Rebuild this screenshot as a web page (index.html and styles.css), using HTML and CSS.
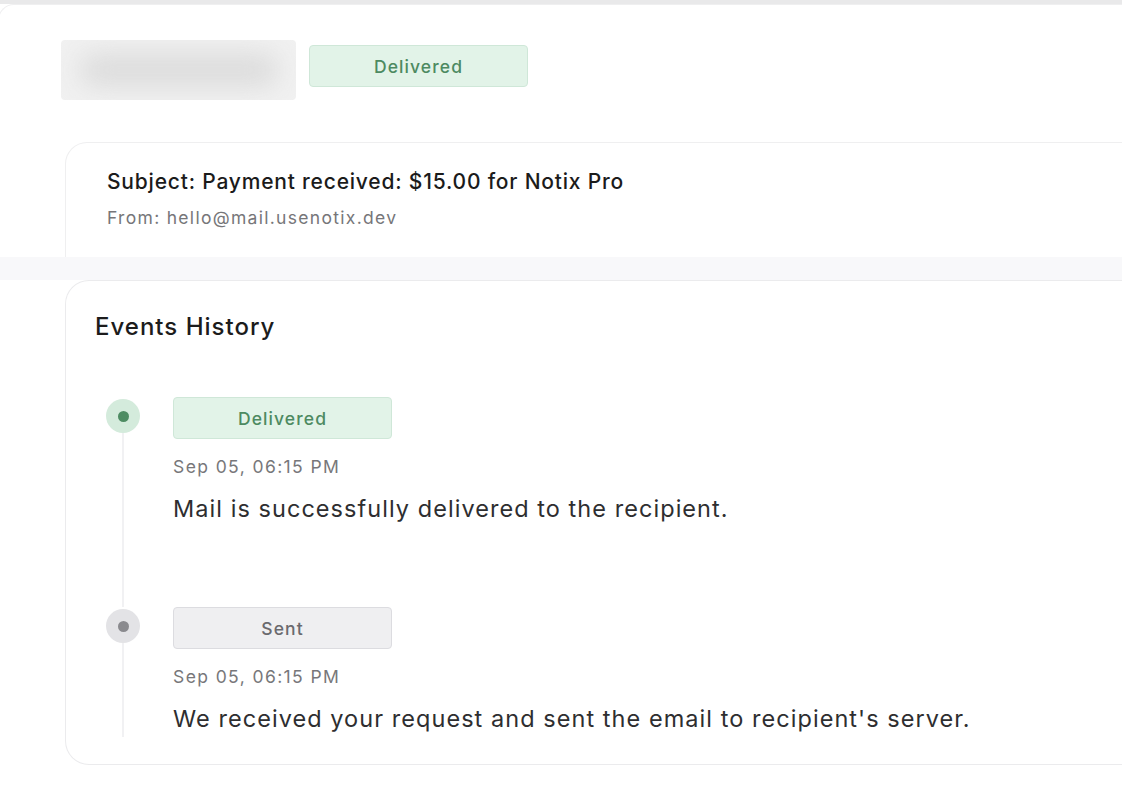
FILE: index.html
```html
<!DOCTYPE html>
<html lang="en">
<head>
<meta charset="utf-8">
<title>Email details</title>
<link rel="stylesheet" href="styles.css">
</head>
<body>
<div class="panel">
  <div class="header">
    <div class="blurred"><div class="blurred-inner"></div></div>
    <span class="badge badge-green badge-head">Delivered</span>
  </div>
  <div class="subject-card">
    <div class="subject">Subject: Payment received: $15.00 for Notix Pro</div>
    <div class="from">From: hello@mail.usenotix.dev</div>
  </div>
</div>
<div class="band"></div>
<div class="events-card">
  <h2 class="events-title">Events History</h2>
  <div class="timeline">
    <div class="item">
      <div class="rail">
        <span class="dot dot-green"><span class="dot-core"></span></span>
        <span class="line"></span>
      </div>
      <div class="content">
        <span class="badge badge-green">Delivered</span>
        <div class="date">Sep 05, 06:15 PM</div>
        <div class="desc">Mail is successfully delivered to the recipient.</div>
      </div>
    </div>
    <div class="item item-last">
      <div class="rail">
        <span class="dot dot-gray"><span class="dot-core"></span></span>
        <span class="line"></span>
      </div>
      <div class="content">
        <span class="badge badge-gray">Sent</span>
        <div class="date">Sep 05, 06:15 PM</div>
        <div class="desc">We received your request and sent the email to recipient's server.</div>
      </div>
    </div>
  </div>
</div>
</body>
</html>
```
FILE: styles.css
```css
* { box-sizing: border-box; }
html, body {
  margin: 0;
  padding: 0;
}
body {
  background: #ffffff;
  font-family: Inter, "Helvetica Neue", Arial, sans-serif;
  color: #1a1a1a;
  border-top: 4px solid #e9e9ea;
  overflow: hidden;
  width: 1122px;
  height: 804px;
}
.panel {
  margin-left: -2px;
  width: 1140px;
  border-top: 1px solid #efeff0;
  border-left: 1px solid #efeff0;
  border-top-left-radius: 16px;
  padding: 35px 0 0 62px;
  height: 253px;
  overflow: hidden;
}
.header {
  display: flex;
  align-items: flex-start;
  gap: 13px;
}
.blurred {
  width: 235px;
  height: 60px;
  background: #f1f1f1;
  border-radius: 4px;
  overflow: hidden;
  display: flex;
  align-items: center;
  justify-content: center;
}
.blurred-inner {
  width: 200px;
  height: 34px;
  background: #dcdcdc;
  border-radius: 18px;
  filter: blur(13px);
}
.badge {
  display: inline-flex;
  align-items: center;
  justify-content: center;
  width: 219px;
  height: 42px;
  border-radius: 4px;
  font-size: 17.5px;
  font-weight: 500;
  letter-spacing: 1.1px;
}
.badge-head { margin-top: 5px; }
.badge-green {
  background: #e2f3e8;
  border: 1px solid #cfe7d8;
  color: #4d8a61;
}
.badge-gray {
  background: #efeff1;
  border: 1px solid #dcdce0;
  color: #6a6a6e;
}
.subject-card {
  margin-top: 42px;
  margin-left: 4px;
  border: 1px solid #efeff0;
  border-bottom: none;
  border-radius: 22px 0 0 0;
  padding: 25px 0 0 41px;
  height: 120px;
}
.subject {
  font-size: 21px;
  font-weight: 500;
  color: #1b1b1b;
  line-height: 28px;
  letter-spacing: 0.8px;
}
.from {
  margin-top: 11px;
  font-size: 17.5px;
  color: #767679;
  line-height: 22px;
  letter-spacing: 1.3px;
}
.band {
  height: 23px;
  background: #f8f8fa;
}
.events-card {
  margin-left: 65px;
  width: 1100px;
  height: 485px;
  border: 1px solid #ebebed;
  border-right: none;
  border-radius: 24px 0 0 24px;
  padding: 32px 0 0 29px;
}
.events-title {
  margin: 0;
  font-size: 24px;
  font-weight: 500;
  line-height: 28px;
  letter-spacing: 1px;
  color: #1c1c1c;
}
.timeline {
  margin-top: 56px;
  margin-left: 11px;
}
.item {
  display: grid;
  grid-template-columns: 34px 1fr;
  column-gap: 33px;
  height: 210px;
}
.item-last { height: 130px; }
.rail {
  display: flex;
  flex-direction: column;
  align-items: center;
}
.dot {
  margin-top: 2px;
  width: 34px;
  height: 34px;
  border-radius: 50%;
  display: flex;
  align-items: center;
  justify-content: center;
  flex: none;
}
.dot-green { background: #d4ebdc; }
.dot-green .dot-core { background: #4e8c63; }
.dot-gray { background: #e3e3e6; }
.dot-gray .dot-core { background: #8a8a8e; }
.dot-core {
  width: 11px;
  height: 11px;
  border-radius: 50%;
}
.line {
  flex: 1;
  width: 2px;
  background: #f1f1f3;
}
.content {
  display: flex;
  flex-direction: column;
  align-items: flex-start;
}
.date {
  margin-top: 17px;
  font-size: 17.5px;
  color: #77777a;
  line-height: 22px;
  letter-spacing: 1.4px;
}
.desc {
  margin-top: 16px;
  font-size: 23.5px;
  color: #2e2e30;
  line-height: 30px;
  letter-spacing: 1.05px;
}
```
